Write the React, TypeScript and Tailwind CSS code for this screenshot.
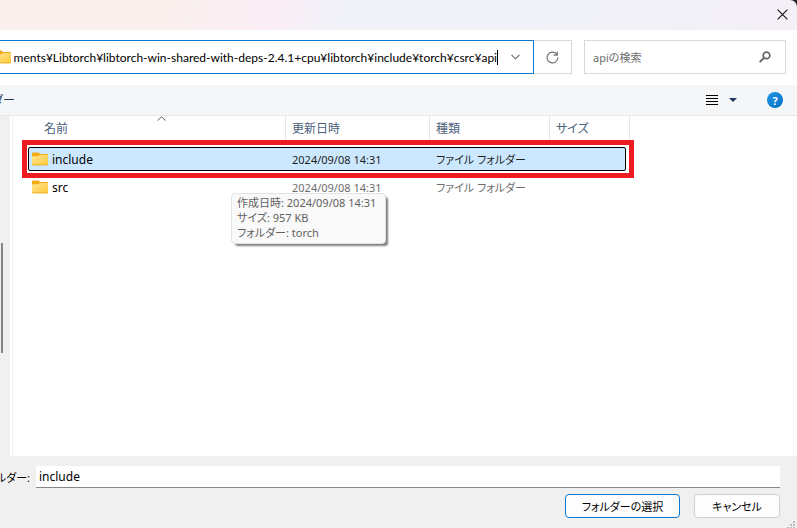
import { useId } from "react";

type Entry = { name: string; modified: string; kind: string; selected?: boolean };

const entries: Entry[] = [
  { name: "include", modified: "2024/09/08 14:31", kind: "ファイル フォルダー", selected: true },
  { name: "src", modified: "2024/09/08 14:31", kind: "ファイル フォルダー" },
];

function FolderIcon({ className = "" }: { className?: string }) {
  const id = useId();
  return (
    <svg className={className} width="16" height="14" viewBox="0 0 16 14" aria-hidden="true">
      <defs>
        <linearGradient id={id} x1="0" y1="0" x2="1" y2="1">
          <stop offset="0" stopColor="#ffe495" />
          <stop offset="1" stopColor="#ffc937" />
        </linearGradient>
      </defs>
      <path d="M0 1.5Q0 .5 1 .5h5.2q.6 0 1 .5L8 2h7q1 0 1 1V7H0Z" fill="#f0ab12" />
      <path d="M0 5q0-.8.8-.8h5.4L8 3h7.2q.8 0 .8.8v8.4q0 1-1 1H1q-1 0-1-1Z" fill={`url(#${id})`} />
      <path d="M.3 12.9h15.4" stroke="#e9a820" strokeWidth=".8" />
    </svg>
  );
}

function HeaderCell({ label, first = false }: { label: string; first?: boolean }) {
  return (
    <th scope="col" className="p-0 align-top font-normal">
      <div
        className={
          "relative h-6 border-r border-[#e5e5e5] text-left leading-[26px] text-[#4c607a] " +
          (first ? "pl-4" : "pl-[6px]")
        }
      >
        {label}
        {first && (
          <svg className="absolute top-0 left-[129px]" width="9" height="5" viewBox="0 0 9 5" fill="none" stroke="#555" aria-hidden="true">
            <path d="m.6 4.6 3.9-3.9 3.9 3.9" />
          </svg>
        )}
      </div>
    </th>
  );
}

export default function App() {
  return (
    <div className="flex min-h-screen flex-col overflow-hidden bg-[#222] font-['Noto_Sans','Noto_Sans_CJK_JP',sans-serif] text-[12px] leading-[15px] text-black [font-feature-settings:'palt']">
      <header className="flex h-[30px] items-start justify-end rounded-tr-[7px] bg-[linear-gradient(100deg,#f9f0ee_0%,#f9f0ee_22%,#fbedf6_34%,#f1f2f9_43%,#f1f2f8_75%,#f5eff7_100%)] pt-[9px] pr-[9px]">
        <button type="button" aria-label="閉じる">
          <svg width="11" height="11" viewBox="0 0 11 11" stroke="#111" strokeWidth="1.1" aria-hidden="true">
            <path d="m.6.6 9.8 9.8M10.4.6.6 10.4" />
          </svg>
        </button>
      </header>

      <div className="flex h-[55px] items-start bg-white pt-[10px] pr-[11px]">
        <div className="flex h-[34px] min-w-0 flex-1 items-center border border-l-0 border-[#0f78d0]">
          <FolderIcon className="-ml-[5px] shrink-0" />
          <div className="flex min-w-0 flex-1 items-center">
            <input
              aria-label="アドレス"
              className="h-5 min-w-0 flex-1 bg-transparent text-right font-['Lato','Noto_Sans_CJK_JP',sans-serif] outline-none"
              defaultValue="ments¥Libtorch¥libtorch-win-shared-with-deps-2.4.1+cpu¥libtorch¥include¥torch¥csrc¥api"
            />
            <span className="h-[15px] w-px bg-black" />
          </div>
          <button type="button" aria-label="以前の場所" className="flex w-[35px] justify-center">
            <svg width="9" height="6" viewBox="0 0 9 6" fill="none" stroke="#666" strokeWidth="1.1" aria-hidden="true">
              <path d="m.5.8 4 4 4-4" />
            </svg>
          </button>
        </div>
        <button type="button" aria-label="最新の情報に更新" className="flex h-[34px] w-[38px] items-center justify-center border border-l-0 border-[#d9d9d9]">
          <svg width="13" height="13" viewBox="0 0 13 13" fill="none" stroke="#737373" strokeWidth="1.2" aria-hidden="true">
            <path d="M11.9 6.6A5.4 5.4 0 1 1 10.6 3M11.3.6v3.6H7.6" />
          </svg>
        </button>
        <label className="ml-3 flex h-[34px] w-[202px] items-center border border-[#d9d9d9] px-2">
          <input aria-label="検索" placeholder="apiの検索" className="min-w-0 flex-1 bg-transparent text-[11px] outline-none placeholder:text-[#6b6b6b]" />
          <svg className="mr-[6px]" width="12" height="12" viewBox="0 0 12 12" fill="none" stroke="#666" aria-hidden="true">
            <circle cx="7.5" cy="4.4" r="3.3" strokeWidth="1.7" />
            <path d="M5.2 6.8.7 11.1" strokeWidth="2" />
          </svg>
        </label>
      </div>

      <div className="flex h-[31px] items-center border-b border-[#e6e8ea] bg-[#f4f6f8] pr-[14px]">
        <button type="button" aria-label="新しいフォルダー" className="-ml-2 text-[12px] text-[#1e395b]">
          ダー
        </button>
        <div className="ml-auto flex items-center">
          <button type="button" aria-label="表示方法" className="mr-[11px]">
            <svg width="12" height="10" viewBox="0 0 12 10" fill="#000" shapeRendering="crispEdges" aria-hidden="true">
              <path d="M0 0h12v1H0zM0 3h12v1H0zM0 6h12v1H0zM0 9h12v1H0z" />
            </svg>
          </button>
          <button type="button" aria-label="その他のオプション" className="mr-[30px]">
            <svg width="8" height="4" viewBox="0 0 8 4" fill="#1e395b" aria-hidden="true">
              <path d="M0 0h8L4 4z" />
            </svg>
          </button>
          <button type="button" aria-label="ヘルプ" className="flex size-4 items-center justify-center rounded-full bg-linear-to-br from-[#2098e4] to-[#0670c4] text-[11px] font-bold text-white">
            ?
          </button>
        </div>
      </div>

      <main className="relative flex flex-1 bg-white">
        <div className="w-[10px] shrink-0 bg-[#f0f0f0] pt-[127px]">
          <div className="ml-px h-[110px] w-[2px] bg-[#858585]" />
        </div>
        <div className="ml-[2px] min-w-0 flex-1 border-l border-[#f3f3f3] pl-[15px]">
          <table className="w-[602px] table-fixed border-collapse">
            <colgroup>
              <col className="w-[258px]" />
              <col className="w-36" />
              <col className="w-[120px]" />
              <col className="w-20" />
            </colgroup>
            <thead>
              <tr className="h-[29px]">
                <HeaderCell label="名前" first />
                <HeaderCell label="更新日時" />
                <HeaderCell label="種類" />
                <HeaderCell label="サイズ" />
              </tr>
            </thead>
            <tbody>
              {entries.map((entry) => (
                <tr key={entry.name} className={"relative isolate h-7 text-[11px] " + (entry.selected ? "text-[#1f1f1f]" : "text-[#6d6d6d]")}>
                  <td className="p-0 text-[12px]">
                    {entry.selected && (
                      <>
                        <span className="absolute -top-[5px] right-[-4px] -bottom-[5px] -left-[6px] -z-10 border-5 border-[#ed1c24] bg-white" />
                        <span className="absolute top-[2px] right-1 bottom-[2px] left-0 -z-10 rounded-[2px] border border-black bg-[#cce8ff]" />
                      </>
                    )}
                    <div className="flex items-center gap-1 pl-1 text-black">
                      <FolderIcon />
                      {entry.name}
                    </div>
                  </td>
                  <td className="p-0 pl-[6px]">{entry.modified}</td>
                  <td className="p-0 pl-[6px]">{entry.kind}</td>
                  <td className="p-0" />
                </tr>
              ))}
            </tbody>
          </table>
        </div>
        <div role="tooltip" className="absolute top-[77px] left-[231px] rounded-[4px] border border-[#e2e2e2] bg-[#f9f9f9] pt-px pr-[9px] pb-[3px] pl-[5px] text-[11px] whitespace-nowrap text-[#616161] shadow-[3px_3px_2px_-1px_rgba(0,0,0,0.5)]">
          <p>作成日時: 2024/09/08 14:31</p>
          <p>サイズ: 957 KB</p>
          <p>フォルダー: torch</p>
        </div>
      </main>

      <footer className="relative bg-[#f0f0f0] pt-[10px] pr-[17px] pb-[10px]">
        <div className="flex items-center justify-between">
          <label htmlFor="folder" className="flex w-[30px] shrink-0 justify-end text-[11px] whitespace-nowrap">
            ルダー:
          </label>
          <input
            id="folder"
            defaultValue="include"
            className="ml-[6px] h-[22px] min-w-0 flex-1 border-b border-[#868686] bg-white px-[3px] outline-none"
          />
        </div>
        <div className="mt-[6px] flex justify-end gap-[14px] text-[11px]">
          <button type="button" className="h-6 w-[115px] rounded-[4px] border border-[#0f78d0] bg-[#fdfdfd]">
            フォルダーの選択
          </button>
          <button type="button" className="h-6 w-[86px] rounded-[4px] border border-[#d0d0d0] bg-[#fdfdfd]">
            キャンセル
          </button>
        </div>
        <svg className="absolute right-0 bottom-0" width="10" height="8" viewBox="0 0 10 8" fill="#bdbdbd" aria-hidden="true">
          <path d="M6 1h2v2H6zM3 4h2v2H3zM6 4h2v2H6zM0 7h2v1H0zM3 7h2v1H3zM6 7h2v1H6z" />
        </svg>
      </footer>
    </div>
  );
}
